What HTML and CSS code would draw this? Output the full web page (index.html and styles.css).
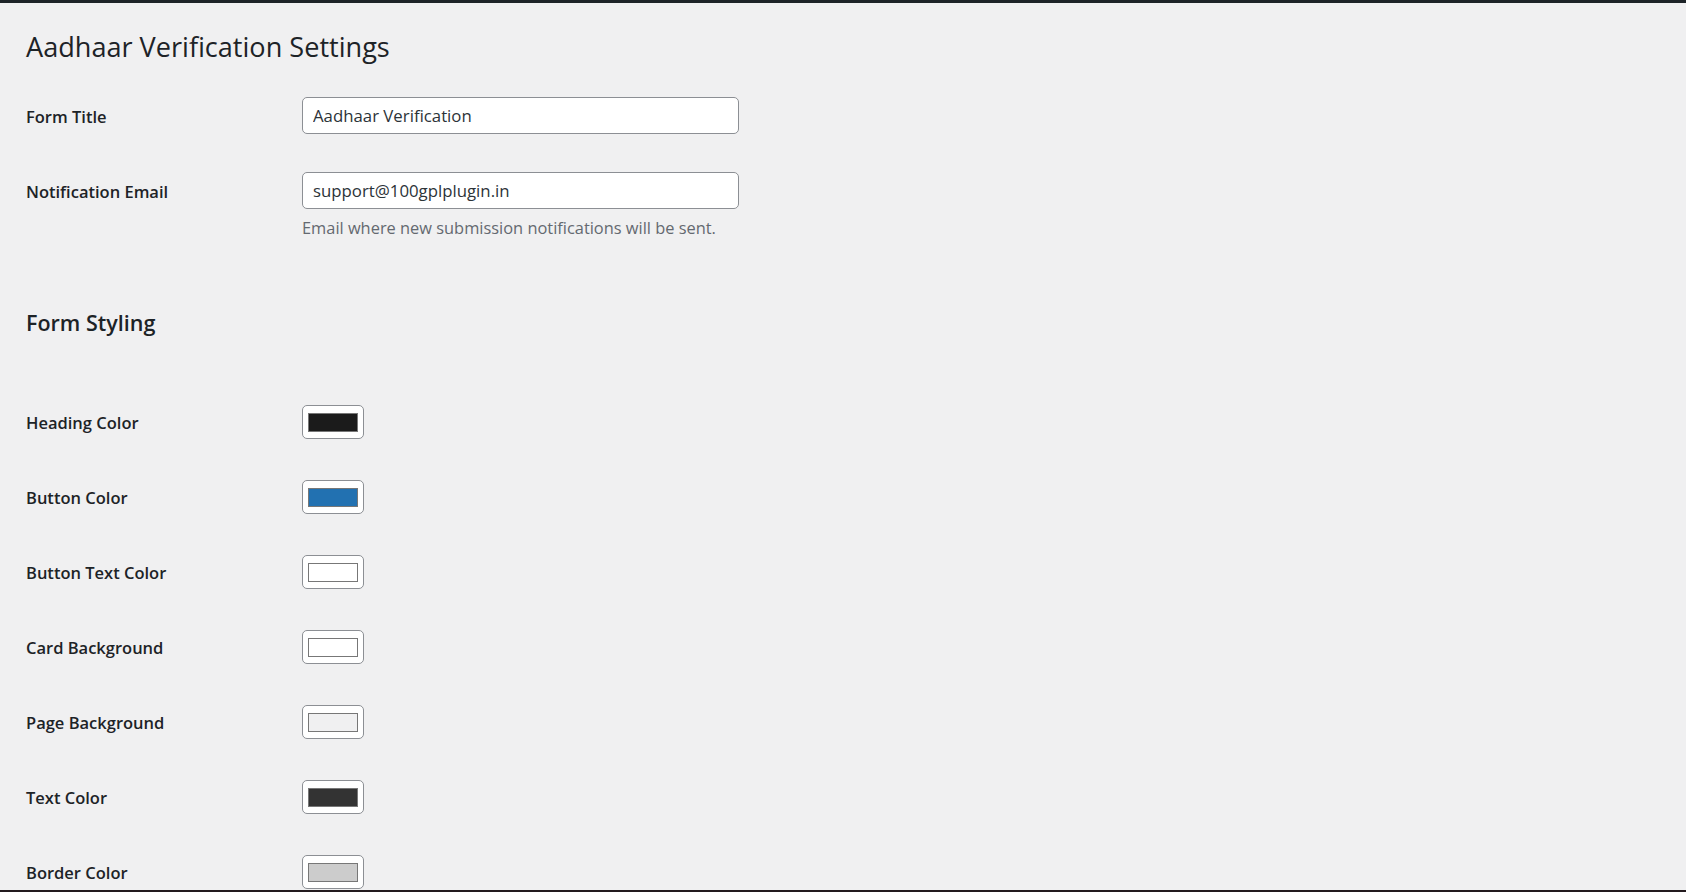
FILE: index.html
```html
<!DOCTYPE html>
<html lang="en">
<head>
    <meta charset="UTF-8">
    <meta name="viewport" content="width=device-width, initial-scale=1.0">
    <title>Aadhaar Verification Settings</title>
    <link rel="stylesheet" href="styles.css">
</head>
<body>

    <!-- Admin bar edge -->
    <div class="top-bar"></div>

    <div class="wrap">
        <h1>Aadhaar Verification Settings</h1>

        <!-- General settings -->
        <div class="form-table">
            <div class="form-row">
                <label class="row-label" for="formTitle">Form Title</label>
                <div class="row-field">
                    <input type="text" id="formTitle" class="regular-text" value="Aadhaar Verification">
                </div>
            </div>
            <div class="form-row">
                <label class="row-label" for="notifyEmail">Notification Email</label>
                <div class="row-field">
                    <input type="text" id="notifyEmail" class="regular-text" value="support@100gplplugin.in">
                    <p class="description">Email where new submission notifications will be sent.</p>
                </div>
            </div>
        </div>

        <h2>Form Styling</h2>

        <!-- Colour pickers -->
        <div class="form-table colors">
            <div class="form-row">
                <span class="row-label">Heading Color</span>
                <div class="row-field"><span class="color-picker"><span class="swatch swatch-heading"></span></span></div>
            </div>
            <div class="form-row">
                <span class="row-label">Button Color</span>
                <div class="row-field"><span class="color-picker"><span class="swatch swatch-button"></span></span></div>
            </div>
            <div class="form-row">
                <span class="row-label">Button Text Color</span>
                <div class="row-field"><span class="color-picker"><span class="swatch swatch-white"></span></span></div>
            </div>
            <div class="form-row">
                <span class="row-label">Card Background</span>
                <div class="row-field"><span class="color-picker"><span class="swatch swatch-white"></span></span></div>
            </div>
            <div class="form-row">
                <span class="row-label">Page Background</span>
                <div class="row-field"><span class="color-picker"><span class="swatch swatch-page"></span></span></div>
            </div>
            <div class="form-row">
                <span class="row-label">Text Color</span>
                <div class="row-field"><span class="color-picker"><span class="swatch swatch-text"></span></span></div>
            </div>
            <div class="form-row">
                <span class="row-label">Border Color</span>
                <div class="row-field"><span class="color-picker"><span class="swatch swatch-border"></span></span></div>
            </div>
        </div>
    </div>

    <!-- Screen edge -->
    <div class="bottom-bar"></div>

</body>
</html>
```

FILE: styles.css
```css
body, html {
    margin: 0;
    padding: 0;
    height: 100%;
    font-family: "Open Sans", "Noto Sans", sans-serif;
    overflow: hidden;
}

body {
    display: flex;
    flex-direction: column;
    background: #f0f0f1;
    color: #1d2327;
}

.top-bar {
    height: 3px;
    background: #1d2327;
    flex-shrink: 0;
}

.bottom-bar {
    height: 2px;
    background: #231a1e;
    flex-shrink: 0;
}

.wrap {
    flex: 1;
    overflow: hidden;
    padding: 25px 0 0 26px;
}

h1 {
    margin: 0 0 18px;
    font-size: 27.1px;
    font-weight: 400;
    line-height: 38px;
}

h2 {
    margin: 55px 0 0;
    font-size: 21.5px;
    font-weight: 600;
    line-height: 30px;
}

/* Settings rows */
.form-row {
    display: flex;
    align-items: flex-start;
    min-height: 75px;
}

.row-label {
    width: 276px;
    flex-shrink: 0;
    padding-top: 21px;
    font-size: 16.5px;
    font-weight: 600;
    line-height: 23px;
}

.row-field {
    padding: 13px 0;
}

.regular-text {
    box-sizing: border-box;
    width: 437px;
    height: 37px;
    margin: 0;
    padding: 0 10px;
    border: 1px solid #8c8f94;
    border-radius: 5px;
    background: #fff;
    color: #2c3338;
    font-family: inherit;
    font-size: 16.8px;
}

.description {
    margin: 7px 0 0;
    font-size: 16.4px;
    line-height: 24px;
    color: #646970;
}

.colors {
    margin-top: 53px;
}

.colors .row-label {
    padding-top: 20px;
}

.colors .row-field {
    padding-top: 14px;
}

/* Colour picker button */
.color-picker {
    box-sizing: border-box;
    display: flex;
    align-items: center;
    justify-content: center;
    width: 62px;
    height: 34px;
    border: 1px solid #8c8f94;
    border-radius: 5px;
    background: #fff;
}

.swatch {
    box-sizing: border-box;
    width: 50px;
    height: 19px;
    border: 1px solid #777;
}

.swatch-heading { background: #1b1b1b; }
.swatch-button { background: #2271b1; }
.swatch-white { background: #fff; }
.swatch-page { background: #f0f0f1; }
.swatch-text { background: #333; }
.swatch-border { background: #ccc; }
```
